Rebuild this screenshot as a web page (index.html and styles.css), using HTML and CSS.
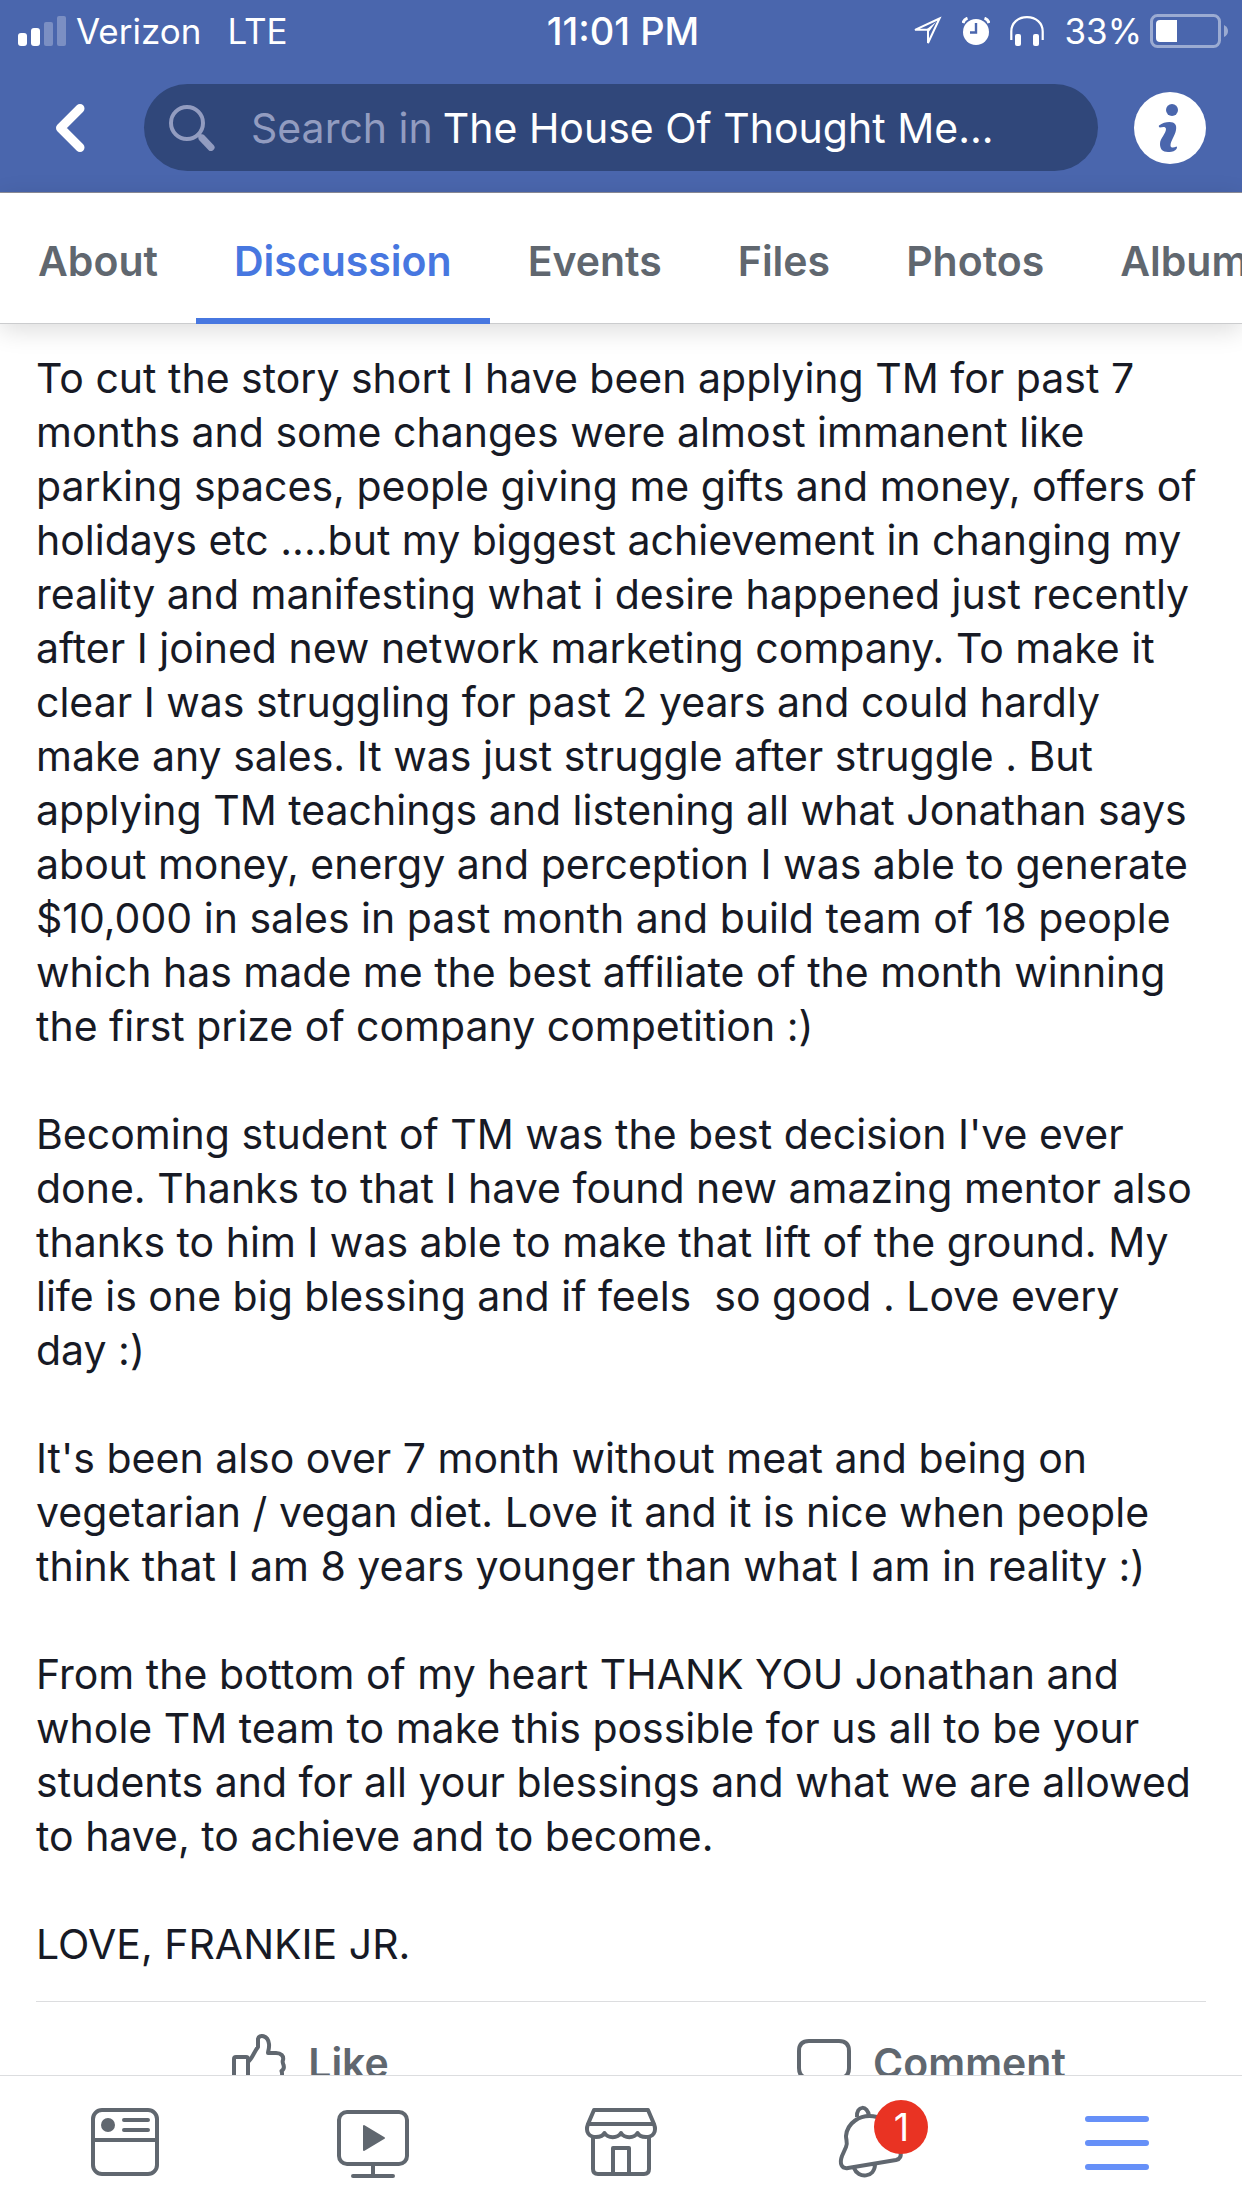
FILE: index.html
```html
<!DOCTYPE html>
<html lang="en">
    <head>
        <meta charset="utf-8">
        <meta name="viewport" content="width=device-width">
        <title>The House Of Thought</title>
        <link rel="stylesheet" href="styles.css">
    </head>
    <body>
        <header class="header">
            <div class="status">
                <div class="status-left">
                    <svg width="48" height="30" viewBox="0 0 48 30" fill="#fff">
                        <rect x="0" y="17" width="9" height="13" rx="3"/>
                        <rect x="13" y="12" width="9" height="18" rx="3"/>
                        <rect x="26" y="6" width="9" height="24" rx="2" opacity=".27"/>
                        <rect x="39" y="0" width="9" height="30" rx="2" opacity=".27"/>
                    </svg>
                    <span>Verizon</span>
                    <span class="network">LTE</span>
                </div>
                <div class="time">11:01 PM</div>
                <div class="status-right">
                    <svg width="30" height="30" viewBox="0 0 30 30">
                        <path d="M27.5 2.5 3 13.8H16V27Z" fill="none" stroke="#fff" stroke-width="2"/>
                        <path d="M14 13.8H16V17L24 6Z" fill="#fff"/>
                    </svg>
                    <svg width="28" height="28" viewBox="0 0 28 28">
                        <circle cx="14" cy="15" r="13" fill="#fff"/>
                        <path d="M14 6V15.5H8" fill="none" stroke="#4a66ad" stroke-width="2.4"/>
                        <path d="M1 6A7 7 0 0 1 5.5 1.2M27 6A7 7 0 0 0 22.5 1.2" fill="none" stroke="#fff" stroke-width="3"/>
                    </svg>
                    <svg width="34" height="30" viewBox="0 0 34 30">
                        <path d="M1.3 24V15.5C1.3 7 8 1.2 17 1.2S32.7 7 32.7 15.5V24" fill="none" stroke="#fff" stroke-width="2.2"/>
                        <rect x="5" y="18" width="6" height="12" rx="2" fill="#fff"/>
                        <rect x="23" y="18" width="6" height="12" rx="2" fill="#fff"/>
                    </svg>
                    <span>33%</span>
                    <svg width="78" height="34" viewBox="0 0 78 34">
                        <rect x="1.5" y="1.5" width="68" height="31" rx="6" fill="none" stroke="#fff" stroke-width="3" opacity=".45"/>
                        <path d="M10 6H27V28H10A4 4 0 0 1 6 24V10A4 4 0 0 1 10 6Z" fill="#fff"/>
                        <path d="M74 11Q78 13 78 17T74 23Z" fill="#fff" opacity=".45"/>
                    </svg>
                </div>
            </div>
            <div class="toolbar">
                <button class="back" aria-label="Back">
                    <svg width="30" height="48" viewBox="0 0 30 48">
                        <path d="M25 4.5 5.5 24 25 43.5" fill="none" stroke="#fff" stroke-width="9" stroke-linecap="round" stroke-linejoin="round"/>
                    </svg>
                </button>
                <div class="search">
                    <svg width="46" height="46" viewBox="0 0 46 46" fill="none" stroke="#929cc0" stroke-linecap="round">
                        <circle cx="18" cy="18" r="16" stroke-width="4"/>
                        <path d="M29.5 29.5 33 33" stroke-width="4"/>
                        <path d="M33 33 42 42.5" stroke-width="7"/>
                    </svg>
                    <label for="search">Search in</label>
                    <input id="search" type="text" value="The House Of Thought Me...">
                </div>
                <button aria-label="Group info">
                    <svg width="72" height="72" viewBox="0 0 72 72">
                        <circle cx="36" cy="36" r="36" fill="#fff"/>
                        <circle cx="38" cy="18" r="6" fill="#4a66ad"/>
                        <path d="M25 33.5C28 31 32 30 35.500 30C41 30 43 33 42 38C41 44 36.500 49 36.500 53.500C36.500 56 39.500 56 42.500 54.500C43.500 55 43 57 41.500 58C39 60 36 60 34 60C28.500 60 26 57 26 52C26 46 32 42 32 37C32 34.500 29 34.500 26 35.500C25 35.500 24.500 34 25 33.500Z" fill="#4a66ad"/>
                    </svg>
                </button>
            </div>
        </header>

        <nav class="tabs">
            <a href="#about">About</a>
            <a class="active" href="#discussion">Discussion</a>
            <a href="#events">Events</a>
            <a href="#files">Files</a>
            <a href="#photos">Photos</a>
            <a href="#albums">Albums</a>
        </nav>

        <main class="post">
            <div class="post-text">
                <p>To cut the story short I have been applying TM for past 7 months and some changes were almost immanent like parking spaces, people giving me gifts and money, offers of holidays etc ....but my biggest achievement in changing my reality and manifesting what i desire happened just recently after I joined new network marketing company. To make it clear I was struggling for past 2 years and could hardly make any sales. It was just struggle after struggle . But applying TM teachings and listening all what Jonathan says about money, energy and perception I was able to generate $10,000 in sales in past month and build team of 18 people which has made me the best affiliate of the month winning the first prize of company competition :)</p>
                <p>Becoming student of TM was the best decision I've ever done. Thanks to that I have found new amazing mentor also thanks to him I was able to make that lift of the ground. My life is one big blessing and if feels  so good . Love every day&nbsp;:)</p>
                <p>It's been also over 7 month without meat and being on vegetarian / vegan diet. Love it and it is nice when people think that I am 8 years younger than what I am in reality :)</p>
                <p>From the bottom of my heart THANK YOU Jonathan and whole TM team to make this possible for us all to be your students and for all your blessings and what we are allowed to have, to achieve and to become.</p>
                <p>LOVE, FRANKIE JR.</p>
            </div>
            <div class="actions">
                <button>
                    <svg width="54" height="58" viewBox="0 0 54 58" fill="none" stroke="#60676f" stroke-width="4" stroke-linejoin="round">
                        <path d="M2 54V25Q2 23 4 23H14Q16 23 16 25V54Z"/>
                        <path d="M16 28C20 25 22 18 26 13V5C27 0 36 1 37 10C37.500 14 36 17 36 19H44C49 19 52 22 51 26C50 28 51 29 51.500 31C52.500 34 51 36 49.500 37C51 41 49 44 47 45C48 49 45 53 41 53H26C22 53 19 51 16 50"/>
                    </svg>
                    Like
                </button>
                <button>
                    <svg width="54" height="58" viewBox="0 0 54 58" fill="none" stroke="#60676f" stroke-width="4" stroke-linejoin="round">
                        <path d="M12 7H42Q52 7 52 17V34Q52 44 42 44H26L14 54V44H12Q2 44 2 34V17Q2 7 12 7Z"/>
                    </svg>
                    Comment
                </button>
            </div>
        </main>

        <nav class="bottom-nav">
            <button aria-label="News feed">
                <svg width="84" height="84" viewBox="0 0 84 84" fill="none" stroke="#60676f" stroke-width="4" stroke-linecap="round">
                    <rect x="11" y="10" width="64" height="64" rx="9"/>
                    <path d="M11 40H75M42 20H66M42 30H66"/>
                    <circle cx="26" cy="25" r="7" fill="#60676f" stroke="none"/>
                </svg>
            </button>
            <button aria-label="Watch">
                <svg width="84" height="84" viewBox="0 0 84 84" fill="none" stroke="#60676f" stroke-width="4" stroke-linecap="round">
                    <rect x="8" y="12" width="68" height="52" rx="8"/>
                    <path d="M42 64V76M22 76H62"/>
                    <path d="M33 26V50L53 38Z" fill="#60676f" stroke-width="2" stroke-linejoin="round"/>
                </svg>
            </button>
            <button aria-label="Marketplace">
                <svg width="84" height="84" viewBox="0 0 84 84" fill="none" stroke="#60676f" stroke-width="4" stroke-linejoin="round">
                    <path d="M9 24 15 10H69L75 24Z"/>
                    <path d="M9 24C6 32 10 37 17 37C21 37 24 36 25.500 33C29 38.500 38.500 38.500 42 33C45.500 38.500 55 38.500 58.500 33C60 36 63 37 67 37C74 37 78 32 75 24"/>
                    <path d="M14 37V69Q14 74 19 74H65Q70 74 70 69V37M34 74V48H50V74"/>
                </svg>
            </button>
            <button aria-label="Notifications, 1 new">
                <span class="bell">
                    <svg width="84" height="84" viewBox="0 0 84 84" fill="none" stroke="#60676f" stroke-width="4" stroke-linejoin="round">
                        <path d="M30 17C29 5 41 5 42 16"/>
                        <path d="M50 17C32 13 20 24 19 36C19 40 21 43 19 47L15 56C12 64 15 69 21 68L69 60C73 59 75 56 73 51L66 42C64 36 66 20 50 17Z"/>
                        <path d="M27 68C31 79 48 78 48 64"/>
                    </svg>
                    <span class="badge">1</span>
                </span>
            </button>
            <button aria-label="Menu">
                <svg width="84" height="84" viewBox="0 0 84 84" fill="none" stroke="#6690f8" stroke-width="6" stroke-linecap="round">
                    <path d="M12 19H70M12 43H70M12 67H70"/>
                </svg>
            </button>
        </nav>
    </body>
</html>
```

FILE: styles.css
```css
:root {
    --blue: #4a66ad;
    --active: #4777e0;
    --gray: #60676f;
    --line: #dcdddf;
}
* {
    box-sizing: border-box;
}
body {
    margin: 0;
    height: 100vh;
    display: flex;
    flex-direction: column;
    overflow: hidden;
    background-color: white;
    color: #171a25;
    font-family: Inter, "Liberation Sans", sans-serif;
    font-size: 41px;
}
button {
    border: 0;
    padding: 0;
    background: none;
    font-family: inherit;
}
svg {
    display: block;
    flex-shrink: 0;
}

/* top bar */
.header {
    background-color: var(--blue);
    border-bottom: 1px solid #8f8f99;
    color: white;
}
.status {
    display: grid;
    grid-template-columns: 1fr auto 1fr;
    align-items: center;
    height: 62px;
    padding: 0 14px 0 18px;
    font-size: 35px;
}
.status-left,
.status-right {
    display: flex;
    align-items: center;
    gap: 10px;
}
.status-right {
    justify-content: flex-end;
    gap: 20px;
}
.status-right span {
    margin-right: -12px;
}
.network {
    margin-left: 16px;
}
.time {
    font-size: 38px;
    font-weight: 500;
}
.toolbar {
    display: flex;
    align-items: center;
    gap: 36px;
    padding: 22px 36px 21px;
}
.back {
    display: flex;
    flex-shrink: 0;
    justify-content: center;
    width: 72px;
    padding-right: 5px;
}
.search {
    flex: 1;
    display: flex;
    align-items: center;
    min-width: 0;
    height: 87px;
    padding: 0 25px;
    border-radius: 44px;
    background-color: #30477a;
}
.search label {
    margin-left: 36px;
    color: #929cc0;
    white-space: nowrap;
}
.search input {
    flex: 1;
    min-width: 0;
    margin-left: 10px;
    padding: 0;
    border: 0;
    outline: 0;
    background: none;
    color: white;
    font: inherit;
}

/* group tabs */
.tabs {
    display: flex;
    height: 131px;
    flex-shrink: 0;
    border-bottom: 1px solid #cbccce;
    box-shadow: 0 6px 24px rgba(0, 0, 0, 0.14);
    white-space: nowrap;
}
.tabs a {
    display: flex;
    align-items: center;
    height: 131px;
    padding: 10px 38px 0;
    border-bottom: 6px solid transparent;
    color: var(--gray);
    font-weight: 600;
    text-decoration: none;
}
.tabs .active {
    color: var(--active);
    border-color: var(--active);
}

/* post */
.post {
    flex: 1;
    min-height: 0;
    overflow: hidden;
    padding-top: 27px;
}
.post-text {
    margin: 0 36px;
    padding-bottom: 30px;
    border-bottom: 1px solid var(--line);
    line-height: 54px;
}
.post-text p {
    margin: 0 0 54px;
    white-space: pre-wrap;
}
.post-text p:last-child {
    margin-bottom: 0;
}
.actions {
    display: flex;
    height: 122px;
}
.actions button {
    flex: 1;
    display: flex;
    align-items: center;
    justify-content: center;
    gap: 22px;
    color: var(--gray);
    font-size: 41px;
    font-weight: 600;
}

/* bottom bar */
.bottom-nav {
    display: flex;
    flex-shrink: 0;
    height: 133px;
    border-top: 1px solid var(--line);
    background-color: white;
}
.bottom-nav button {
    flex: 1;
    display: flex;
    align-items: center;
    justify-content: center;
}
.bell {
    position: relative;
}
.badge {
    position: absolute;
    top: 0;
    left: 47px;
    width: 54px;
    height: 54px;
    border-radius: 50%;
    background-color: #e93323;
    color: white;
    font-size: 38px;
    line-height: 54px;
    text-align: center;
}
```
